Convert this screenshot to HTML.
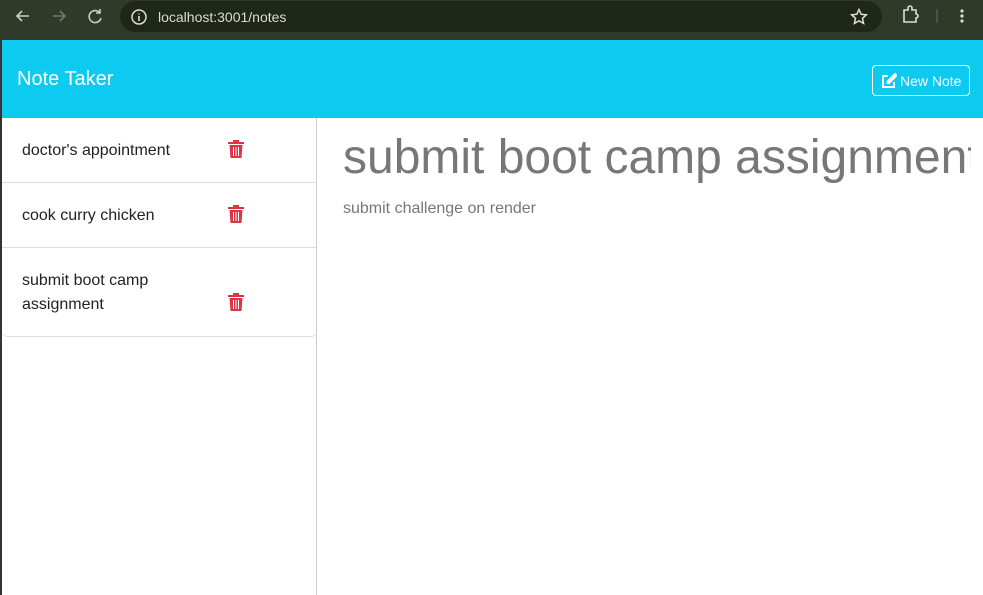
<!DOCTYPE html>
<html><head><meta charset="utf-8"><style>
*{box-sizing:border-box;margin:0;padding:0}
body{width:983px;height:595px;overflow:hidden;font-family:"Liberation Sans",sans-serif;background:#fff;position:relative}
.chrome{position:absolute;left:0;top:0;width:983px;height:40px;background:#2f3a28}
.url{position:absolute;left:120px;top:1px;width:762px;height:31px;border-radius:16px;background:#1f2818}
.url span{position:absolute;left:38px;top:8px;color:#d8dcd0;font-size:14px}
.nav{position:absolute;background:#0dcaf0;left:0;width:983px;top:40px;height:78px;border-left:2px solid #333}
.nav h1{position:absolute;left:15px;top:28px;color:#fff;font-size:20px;font-weight:normal}
.btn{position:absolute;right:13px;top:25px;width:98px;height:31px;border:1px solid #fff;border-radius:4px;color:#fff;font-size:14px;padding:7px 0 0 27px}
.side{position:absolute;left:0;top:118px;width:317px;height:477px;border-right:1px solid #ccc;border-left:2px solid #333}
.item{position:relative;border-bottom:1px solid #ddd;width:315px;font-size:16px;color:#222;padding-left:20px;line-height:24px}
.item svg{position:absolute;left:225px}
.main{position:absolute;left:343px;top:130px;color:#777}
.main h2{font-size:48px;font-weight:normal;white-space:nowrap;width:628px;overflow:hidden;line-height:56px}
.main p{font-size:16px;margin-top:14px}
</style></head><body>
<div class="chrome">
<svg width="120" height="32" style="position:absolute;left:0;top:0" stroke="#ccc" stroke-width="1.6" fill="none"><path d="M29 16H17M22 11l-5 5 5 5"/><path d="M53 16h12M60 11l5 5-5 5" stroke="#777"/><path d="M100 13a6 6 0 1 0 1 5M100 9v4h-4"/></svg>
<div class="url"><svg width="20" height="20" style="position:absolute;left:9px;top:6px"><circle cx="10" cy="10" r="7" stroke="#ddd" stroke-width="1.5" fill="none"/><path d="M10 9v5M10 6.5v1" stroke="#ddd" stroke-width="1.6"/></svg><span>localhost:3001/notes</span>
<svg width="18" height="18" style="position:absolute;left:730px;top:7px"><path d="M9 1.5l2.2 4.8 5.2.5-3.9 3.5 1.1 5.1L9 12.8 4.4 15.4l1.1-5.1L1.6 6.8l5.2-.5z" stroke="#ddd" stroke-width="1.5" fill="none"/></svg></div>
<svg width="80" height="32" style="position:absolute;left:900px;top:0" fill="none" stroke="#ddd" stroke-width="1.6"><path d="M4 10h4v-2a2 2 0 0 1 4 0v2h4v4a2 2 0 0 1 0 4v4H4z"/><path d="M37 9v14" stroke="#555"/><circle cx="62" cy="11" r=".8"/><circle cx="62" cy="16" r=".8"/><circle cx="62" cy="21" r=".8"/></svg>
</div>
<div class="nav"><h1>Note Taker</h1><div class="btn"><svg width="16" height="16" style="position:absolute;left:8px;top:7px" fill="none" stroke="#fff" stroke-width="2"><path d="M7 3H2v11h11V9"/><path d="M14 1l1.5 1.5L8 10H6.5V8.5z" fill="#fff"/></svg>New Note</div></div>
<div class="side">
<div class="item" style="height:65px;padding-top:21px">doctor's appointment<svg style="top:21px" width="18" height="20"><path d="M1 3h16v2H1zM6 1h6v2H6zM2.5 6h13l-1 13h-11z" fill="#dc3545"/><path d="M6.5 8v9M9 8v9M11.5 8v9" stroke="#fff" stroke-width="1"/></svg></div>
<div class="item" style="height:65px;padding-top:21px">cook curry chicken<svg style="top:21px" width="18" height="20"><path d="M1 3h16v2H1zM6 1h6v2H6zM2.5 6h13l-1 13h-11z" fill="#dc3545"/><path d="M6.5 8v9M9 8v9M11.5 8v9" stroke="#fff" stroke-width="1"/></svg></div>
<div class="item" style="height:89px;padding-top:21px;border-radius:0 0 6px 6px">submit boot camp<br>assignment<svg style="top:44px" width="18" height="20"><path d="M1 3h16v2H1zM6 1h6v2H6zM2.5 6h13l-1 13h-11z" fill="#dc3545"/><path d="M6.5 8v9M9 8v9M11.5 8v9" stroke="#fff" stroke-width="1"/></svg></div>
</div>
<div class="main"><h2>submit boot camp assignment</h2><p>submit challenge on render</p></div>
</body></html>
